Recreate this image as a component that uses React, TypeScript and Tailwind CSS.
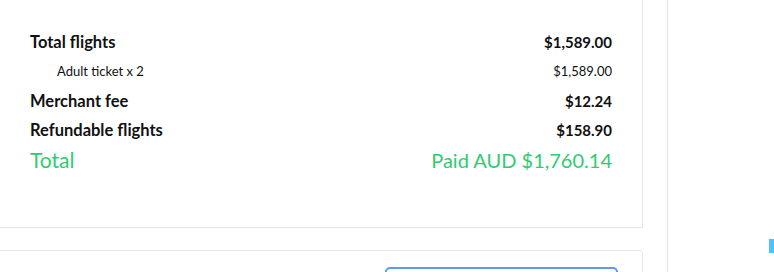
const rows = [
  { label: "Total flights", amount: "$1,589.00", kind: "main" },
  { label: "Adult ticket x 2", amount: "$1,589.00", kind: "sub" },
  { label: "Merchant fee", amount: "$12.24", kind: "main" },
  { label: "Refundable flights", amount: "$158.90", kind: "main" },
];

export default function App() {
  return (
    <div className="h-[272px] w-[774px] overflow-hidden bg-white flex font-['Lato',sans-serif] text-[#111]">
      {/* main column */}
      <div className="-ml-[10px] w-[653px] shrink-0 flex flex-col gap-[22px]">
        <div className="border border-t-0 border-[#e6e6e6] bg-white pl-[39px] pr-[30px] pt-[28px] pb-[52px]">
          {rows.map((r) => (
            <div
              key={r.label}
              className={`flex items-center justify-between ${r.kind === "sub" ? "h-[30px] pl-[27px] text-[13px]" : "h-[29px] text-[15px] font-bold"}`}
            >
              <span className={r.kind === "sub" ? "" : "text-[16.5px]"}>{r.label}</span>
              <span>{r.amount}</span>
            </div>
          ))}
          <div className="flex h-[30px] items-center justify-between text-[20px] text-[#2ecc71]">
            <span className="text-[21px]">Total</span>
            <span>Paid AUD $1,760.14</span>
          </div>
        </div>

        <div className="rounded-[4px] border border-[#e6e6e6] bg-white pt-[16px] pr-[24px] flex justify-end">
          <button className="h-[44px] w-[233px] rounded-[5px] border-2 border-[#5b9cf0] bg-white" />
        </div>
      </div>

      {/* sidebar */}
      <div className="ml-[24px] flex-1 border-l border-[#e6e6e6] pt-[239px] pl-[101px]">
        <div className="h-[14px] w-[20px] bg-[#4fc3f7]" />
      </div>
    </div>
  );
}
